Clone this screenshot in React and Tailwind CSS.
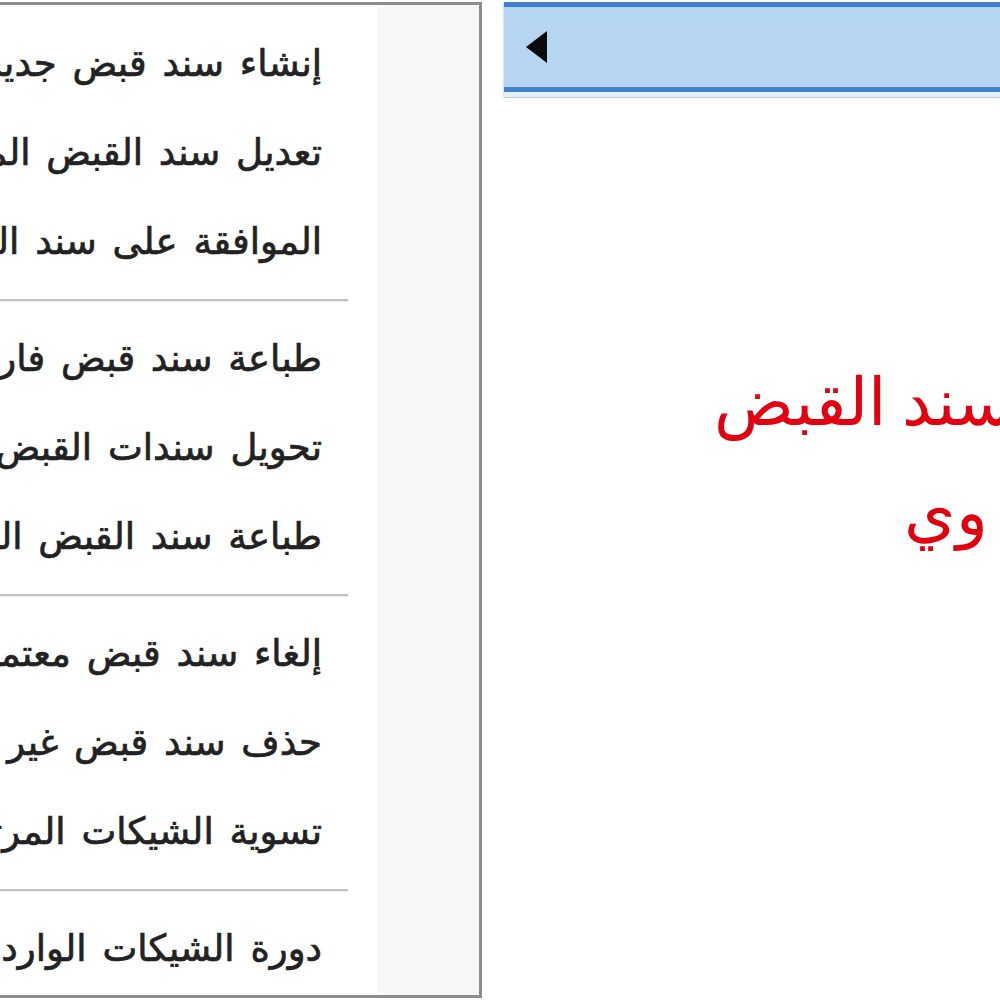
import React from 'react'

const groups = [
  ['إنشاء سند قبض جديد', 'تعديل سند القبض المحدد', 'الموافقة على سند القبض'],
  ['طباعة سند قبض فارغ', 'تحويل سندات القبض', 'طباعة سند القبض المحدد'],
  ['إلغاء سند قبض معتمد', 'حذف سند قبض غير معتمد', 'تسوية الشيكات المرتجعة'],
  ['دورة الشيكات الواردة'],
]

function MenuItem({ label }) {
  return (
    <div className="h-[89px] flex items-center pr-[55px] whitespace-nowrap text-[37px] text-[#222222] [word-spacing:4px] [-webkit-text-stroke:0.7px_#222222]">
      <span>{label}</span>
    </div>
  )
}

function Separator() {
  return (
    <div className="h-[28px] flex items-center mr-[29px]">
      <div className="w-full h-[3px] bg-[#c2c2c2] border-b border-[#ececec]" />
    </div>
  )
}

function ContextMenu() {
  return (
    <div
      dir="rtl"
      className="w-[482px] shrink-0 mt-[2px] h-[996px] border-[3px] border-l-0 border-[#8d8d8d] bg-white flex overflow-hidden"
      style={{ fontFamily: '"DejaVu Sans", Tahoma, sans-serif' }}
    >
      <div className="w-[102px] shrink-0 bg-[#f7f7f7]" />
      <div className="flex-1 min-w-0 pt-[14px] flex flex-col overflow-hidden">
        {groups.map((items, gi) => (
          <div key={gi}>
            {gi > 0 && <Separator />}
            {items.map((label) => (
              <MenuItem key={label} label={label} />
            ))}
          </div>
        ))}
      </div>
    </div>
  )
}

export default function App() {
  return (
    <div className="w-[1000px] h-[1000px] overflow-hidden bg-white flex">
      <ContextMenu />
      <div className="flex-1 min-w-0 ml-[21px] flex flex-col">
        <div className="mt-[2px] border-l border-[#d6e7f6] w-[600px]">
          <div className="h-[5px] bg-[#3f82cb]" />
          <div className="h-[80px] bg-[#b6d5f1] flex items-center pl-[22px]">
            <svg width="21" height="32" viewBox="0 0 21 32">
              <path d="M21 0 L0 16 L21 32 Z" fill="#0a0a0a" />
            </svg>
          </div>
          <div className="h-[5px] bg-[#3f82cb]" />
          <div className="h-[5px] bg-[#e4f0fb]" />
          <div className="h-[1px] bg-[#c7c7c7]" />
        </div>
        <div
          dir="rtl"
          className="mt-[250px] mr-[-12px] text-right text-[66px] leading-[110px] text-[#e3000f] whitespace-nowrap"
          style={{ fontFamily: '"Liberation Serif", "Times New Roman", serif' }}
        >
          <div>سند القبض</div>
          <div className="pr-[24px]">وي</div>
        </div>
      </div>
    </div>
  )
}
